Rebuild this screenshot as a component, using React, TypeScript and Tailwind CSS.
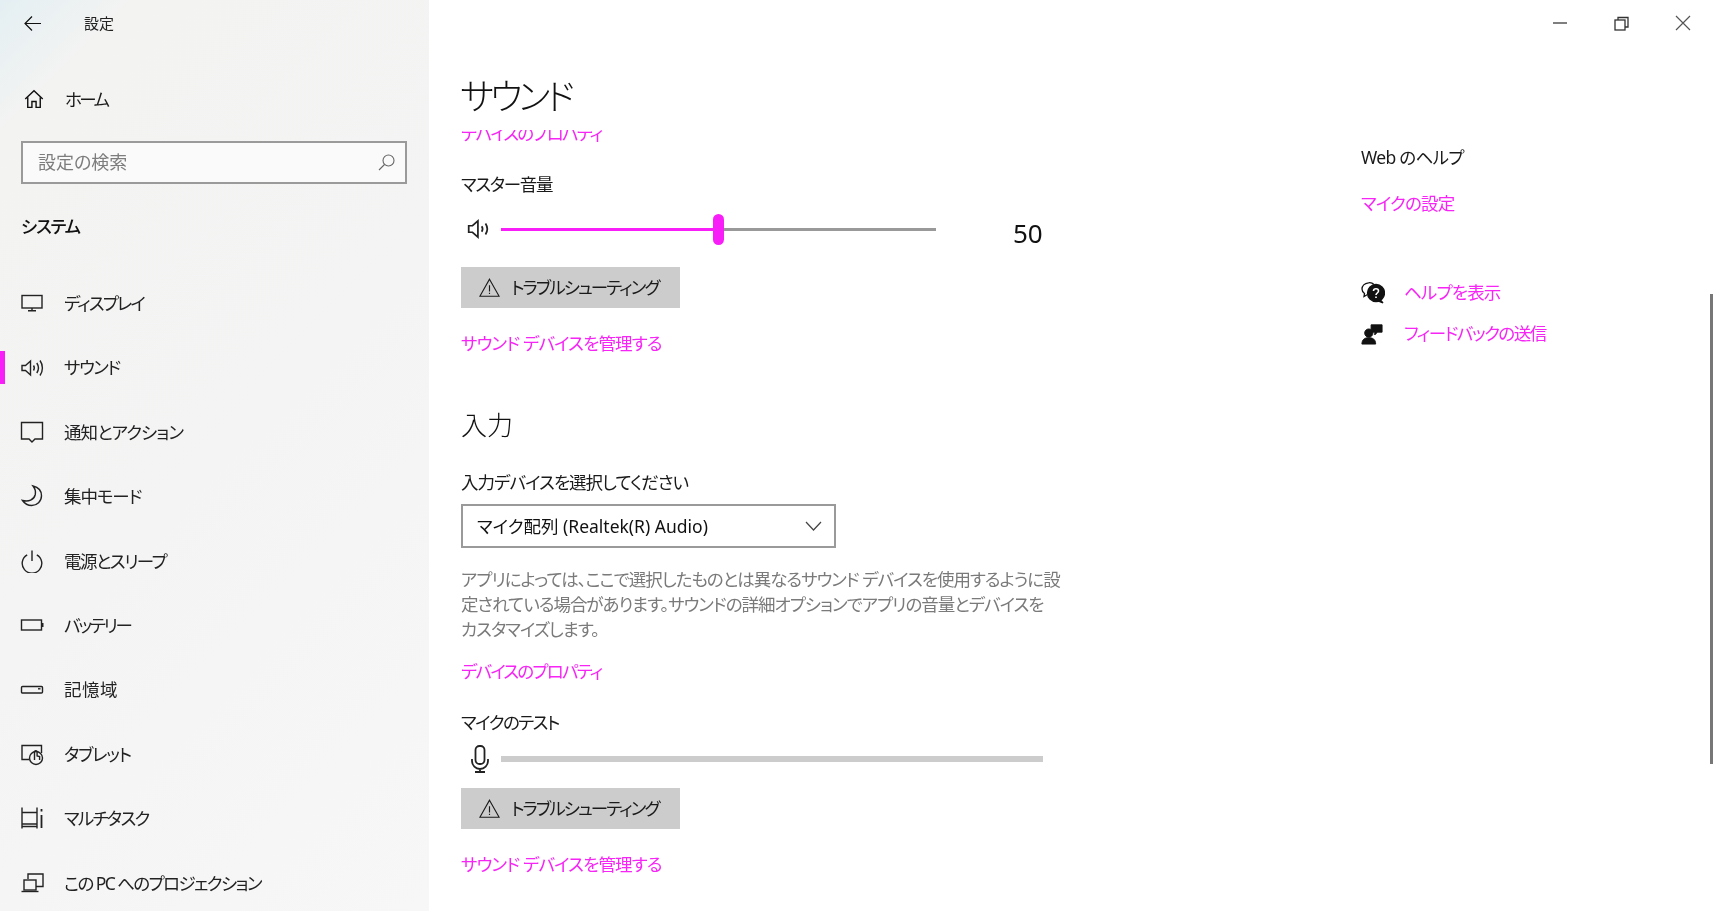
import React from "react";

const Svg = ({ w = 24, h = 24, vb = "0 0 24 24", sw = 1.4, children }: { w?: number; h?: number; vb?: string; sw?: number; children: React.ReactNode }) => (
  <svg width={w} height={h} viewBox={vb} fill="none" stroke="currentColor" strokeWidth={sw} className="shrink-0">
    {children}
  </svg>
);

const icons: Record<string, React.ReactNode> = {
  display: <><rect x="2" y="4.500" width="20" height="12.500" /><path d="M12 17v2.500M8 19.800h8" /></>,
  sound: <><path d="M2 9.500h3.500L10.500 5v14l-5-4.500H2z" /><path d="M13.500 9.500c1 1.500 1 3.500 0 5M16.800 7c2 3 2 7 0 10M20 4.500c3.200 4.500 3.200 10.500 0 15" /></>,
  notify: <path d="M1.500 2.500h21v16.500h-7.500l-3 3-3-3H1.500z" />,
  moon: <path d="M13 2c5.500 1.300 8.500 5 8.500 9.800 0 5.500-4.500 9.700-9.800 9.700-4 0-7-1.800-9.200-5 6 1.500 11.500-.5 12.800-6 .6-3-.3-6-2.300-8.500z" />,
  power: <><path d="M7.200 5.800a9.800 9.800 0 1 0 9.600 0" /><path d="M12 1.500v10.500" /></>,
  battery: <><rect x="1.500" y="7" width="20" height="10" /><path d="M22.500 10v4" strokeWidth="2" /></>,
  storage: <><rect x="1.500" y="8.500" width="21" height="6.500" rx="1" /><path d="M18 10.800h2.500" /></>,
  tablet: <><path d="M9 17.500H2V3.500h19.500V11" /><circle cx="16" cy="16" r="6.500" /><path d="M14.500 18v-8a1.300 1.300 0 0 1 2.600 0v4l2.500.5v3.500" /></>,
  multi: <><path d="M2 1.500v21M17 1.500v21M2 6.500h15M2 18h15M2 20.500h15" /><path d="M21.500 3v2.500M21.500 9v13" strokeWidth="1.800" /></>,
  project: <><path d="M8 8V3h15v12.500h-7" /><rect x="4" y="9" width="12" height="10" /><path d="M1.500 20.500h17" /></>,
};

const navItems = [
  ["display", "ディスプレイ", "tracking-[-1.9px]"],
  ["sound", "サウンド", "tracking-[-1.5px]"],
  ["notify", "通知とアクション", "tracking-[-0.9px]"],
  ["moon", "集中モード", "tracking-[-1.1px]"],
  ["power", "電源とスリープ", "tracking-[-1.5px]"],
  ["battery", "バッテリー", "tracking-[-2.2px]"],
  ["storage", "記憶域", "tracking-[0.5px]"],
  ["tablet", "タブレット", "tracking-[-1.3px]"],
  ["multi", "マルチタスク", "tracking-[-1.7px]"],
  ["project", "この PC へのプロジェクション", "tracking-[-1.6px]"],
];

const A = ({ children, className = "" }: { children: React.ReactNode; className?: string }) => (
  <a className={`block h-[25px] leading-[25px] text-[17.5px] text-[#f625f6] whitespace-nowrap ${className}`}>{children}</a>
);

const Trouble = ({ className = "" }: { className?: string }) => (
  <button className={`flex items-center h-[41px] w-[219px] bg-[#cccccc] pl-[18px] text-[17.5px] text-[#1a1a1a] ${className}`}>
    <Svg w={21} h={21} sw={1.3}>
      <path d="M12 2.500L23 22H1z" />
      <path d="M12 9.500v7M12 18v1.500" />
    </Svg>
    <span className="ml-[11px] tracking-[-1.9px] whitespace-nowrap">トラブルシューティング</span>
  </button>
);

const Label = ({ children, className = "" }: { children: React.ReactNode; className?: string }) => (
  <div className={`h-[25px] leading-[25px] text-[17.5px] text-[#1a1a1a] whitespace-nowrap ${className}`}>{children}</div>
);

export default function App() {
  return (
    <div className="flex w-[1715px] h-[911px] overflow-hidden bg-white text-[#111] blur-[0.4px] [font-family:'Noto_Sans','Noto_Sans_CJK_JP',sans-serif] [font-feature-settings:'palt']">
      <aside className="w-[429px] shrink-0 h-full bg-[linear-gradient(135deg,#e4eff3_0%,#f3f3f2_10%,#f4f4f4_50%,#f7f7f7_100%)]">
        <div className="flex items-center h-[46px] pl-[24px]">
          <Svg w={17} h={17} vb="0 0 17 17" sw={1.2}>
            <path d="M1 8.500h16M8 1.500l-7 7 7 7" />
          </Svg>
          <span className="ml-[43px] text-[15px] text-[#222]">設定</span>
        </div>
        <div className="flex items-center h-[40px] mt-[33px] pl-[24px]">
          <Svg w={20} h={20} sw={1.7}>
            <path d="M1.500 12L12 2l10.500 10" />
            <path d="M4.500 10v12h5v-7h5v7h5V10" />
          </Svg>
          <span className="ml-[21px] text-[17.5px] tracking-[-2.5px] text-[#1a1a1a]">ホーム</span>
        </div>
        <div className="flex items-center justify-between h-[43px] w-[386px] mt-[22px] ml-[21px] border-2 border-[#9a9a9a] bg-[#fafafa] pl-[15px] pr-[10px]">
          <span className="text-[18px] text-[#7d7d7d]">設定の検索</span>
          <span className="text-[#666]">
            <Svg w={17} h={17} vb="0 0 17 17" sw={1.1}>
              <circle cx="10.500" cy="6.500" r="5.500" />
              <path d="M6.500 10.500L1 16" />
            </Svg>
          </span>
        </div>
        <div className="h-[30px] leading-[30px] mt-[27px] ml-[21px] text-[17.5px] tracking-[-1.2px] font-medium text-[#111]">システム</div>
        <div className="mt-[30px]">
          {navItems.map(([icon, label, track]) => (
            <div key={icon} className="flex items-center h-[64.4px]">
              <div className={`w-[5px] h-[33px] ${icon === "sound" ? "bg-[#f81ef8]" : ""}`} />
              <span className="ml-[15px] w-[24px] text-[#222]"><Svg sw={1.4}>{icons[icon]}</Svg></span>
              <span className={`ml-[20px] text-[17.5px] text-[#222] ${track}`}>{label}</span>
            </div>
          ))}
        </div>
      </aside>

      <main className="relative flex-1 flex flex-col h-full">
        <div className="flex items-center justify-end h-[46px] pr-[24px] text-[#555]">
          <Svg w={16} h={16} vb="0 0 16 16" sw={1.5}><path d="M1 8h14" /></Svg>
          <span className="ml-[46px] text-[#333]">
            <Svg w={15} h={15} vb="0 0 15 15" sw={1.3}>
              <rect x="1" y="4" width="10" height="10" />
              <path d="M4 4V1.500h10V11h-3" />
            </Svg>
          </span>
          <span className="ml-[46px]">
            <Svg w={16} h={16} vb="0 0 16 16" sw={1.2}><path d="M1 1l14 14M15 1L1 15" /></Svg>
          </span>
        </div>
        <h1 className="h-[84px] pl-[31px] pt-[26px] text-[36px] leading-[50px] tracking-[-4px] font-light text-[#111]">サウンド</h1>

        <div className="flex flex-1 min-h-0 overflow-hidden">
          <div className="w-[932px] shrink-0 pl-[32px]">
            <A className="-mt-[9px] tracking-[-1.8px]">デバイスのプロパティ</A>
            <Label className="mt-[26px] tracking-[-1.3px]">マスター音量</Label>
            <div className="flex items-center h-[32px] mt-[16px]">
              <span className="ml-[5px] w-[26px] text-[#222]">
                <Svg w={26} h={26} sw={1.6}>
                  <path d="M2.500 9h3.500l5-4.500v15l-5-4.500H2.500z" />
                  <path d="M14.500 9.500c1 1.500 1 3.500 0 5M18 7c2 3 2 7 0 10" />
                </Svg>
              </span>
              <div className="flex items-center w-[435px] ml-[9px]">
                <div className="w-[212px] h-[3px] bg-[#f81ef8]" />
                <div className="w-[11px] h-[31px] rounded-full bg-[#f81ef8]" />
                <div className="flex-1 h-[3px] bg-[#999999]" />
              </div>
              <span className="ml-[77px] pt-[8px] text-[26px] leading-[32px] text-[#111]">50</span>
            </div>
            <Trouble className="mt-[22px]" />
            <A className="mt-[23px] tracking-[-0.85px]">サウンド デバイスを管理する</A>

            <h2 className="h-[36px] leading-[36px] mt-[51px] text-[26px] font-light text-[#111]">入力</h2>
            <Label className="mt-[27px] tracking-[-0.95px]">入力デバイスを選択してください</Label>
            <div className="flex items-center justify-between w-[375px] h-[44px] mt-[9px] border-2 border-[#9a9a9a] pl-[14px] pr-[12px]">
              <span className="text-[17.5px] text-[#111]">マイク配列 (Realtek(R) Audio)</span>
              <span className="text-[#444]">
                <Svg w={17} h={10} vb="0 0 17 10" sw={1.2}><path d="M1 1l7.500 8L16 1" /></Svg>
              </span>
            </div>
            <p className="mt-[19px] text-[17.5px] leading-[25px] tracking-[-1px] text-[#7a7a7a] whitespace-nowrap">
              アプリによっては、ここで選択したものとは異なるサウンド デバイスを使用するように設<br />
              定されている場合があります。サウンドの詳細オプションでアプリの音量とデバイスを<br />
              カスタマイズします。
            </p>
            <A className="mt-[17px] tracking-[-1.8px]">デバイスのプロパティ</A>
            <Label className="mt-[26px] tracking-[-1.5px]">マイクのテスト</Label>
            <div className="flex items-center h-[28px] mt-[10px]">
              <span className="ml-[9px] text-[#222]">
                <Svg w={20} h={28} vb="0 0 20 28" sw={1.8}>
                  <rect x="5.500" y="1" width="9" height="18" rx="4" />
                  <path d="M2 14v2a8 8 0 0 0 16 0v-2M10 24v3M5 27h10" />
                </Svg>
              </span>
              <div className="w-[542px] h-[6px] ml-[11px] -mt-[1px] bg-[#cccccc]" />
            </div>
            <Trouble className="mt-[15px]" />
            <A className="mt-[23px] tracking-[-0.85px]">サウンド デバイスを管理する</A>
          </div>

          <div className="pt-[15px]">
            <Label className="tracking-[-0.7px]">Web のヘルプ</Label>
            <A className="mt-[21px] tracking-[-0.8px]">マイクの設定</A>
            <div className="flex items-center h-[25px] mt-[64px]">
              <Svg w={24} h={24} vb="0 0 24 24" sw={1.3}>
                <path d="M13 3.500C11.500 2 9.500 1.500 7.500 1.800 3.500 2.300 1 5 1 8c0 2 1 3.500 2.500 4.500L3 15.500l3.500-2" />
                <circle cx="15" cy="12" r="8.500" fill="currentColor" />
                <path d="M19 18.500l3 3.500-6-2.500z" fill="currentColor" />
                <path d="M12.500 10c0-3 5-3 5 0 0 2-2.500 2-2.500 4M15 15.500v1.500" stroke="#fff" strokeWidth="1.600" />
              </Svg>
              <A className="ml-[19px] tracking-[-0.8px]">ヘルプを表示</A>
            </div>
            <div className="flex items-center h-[25px] mt-[16px]">
              <Svg w={22} h={22} vb="0 0 24 24" sw={1}>
                <circle cx="8.500" cy="11" r="4.500" fill="currentColor" />
                <path d="M1 23c0-5 3-7 7.500-7s7.500 2 7.500 7z" fill="currentColor" />
                <path d="M11 2h12v8h-5l-3 3v-3h-4z" fill="currentColor" />
              </Svg>
              <A className="ml-[21px] tracking-[-1.5px]">フィードバックの送信</A>
            </div>
          </div>
        </div>

        <div className="absolute right-[2px] top-[294px] w-[3px] h-[470px] bg-[#777777]" />
      </main>
    </div>
  );
}
